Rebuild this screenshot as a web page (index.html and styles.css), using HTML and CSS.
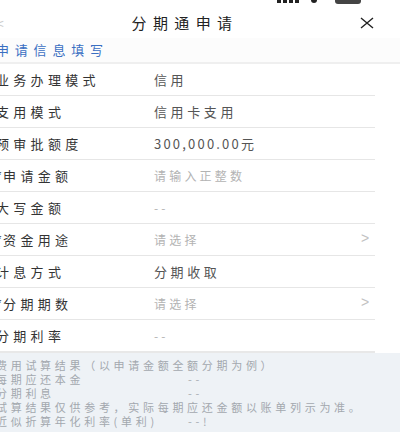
FILE: index.html
```html
<!DOCTYPE html>
<html lang="zh">
<head>
<meta charset="utf-8">
<link rel="stylesheet" href="styles.css">
</head>
<body>
<div class="page">
  <div class="status">
    <span class="time">10:38</span>
    <span class="icons">
      <span class="sig"><i></i><i></i><i></i><i></i></span>
      <span class="wifi"></span>
      <span class="bat"></span>
    </span>
  </div>
  <div class="header">
    <span class="back">&lt;</span>
    <span class="title">分期通申请</span>
    <svg class="close" width="16" height="12" viewBox="0 0 16 12"><path d="M2 1 L14 11 M14 1 L2 11" stroke="#222" stroke-width="1.4" fill="none"/></svg>
  </div>
  <div class="section">申请信息填写</div>
  <div class="list">
    <div class="row"><span class="label">业务办理模式</span><span class="value">信用</span></div>
    <div class="row"><span class="label">支用模式</span><span class="value">信用卡支用</span></div>
    <div class="row"><span class="label">预审批额度</span><span class="value amount">300,000.00元</span></div>
    <div class="row"><span class="label"><span class="req">*</span>申请金额</span><span class="value ph">请输入正整数</span></div>
    <div class="row"><span class="label">大写金额</span><span class="value ph">--</span></div>
    <div class="row"><span class="label"><span class="req">*</span>资金用途</span><span class="value ph">请选择</span><span class="chev">&gt;</span></div>
    <div class="row"><span class="label">计息方式</span><span class="value">分期收取</span></div>
    <div class="row"><span class="label"><span class="req">*</span>分期期数</span><span class="value ph">请选择</span><span class="chev">&gt;</span></div>
    <div class="row last"><span class="label">分期利率</span><span class="value ph">--</span></div>
  </div>
  <div class="calc">
    <div class="line">费用试算结果（以申请金额全额分期为例）</div>
    <div class="line"><span class="k">每期应还本金</span><span class="v">--</span></div>
    <div class="line"><span class="k">分期利息</span><span class="v">--</span></div>
    <div class="line">试算结果仅供参考，实际每期应还金额以账单列示为准。</div>
    <div class="line"><span class="k">近似折算年化利率(单利)</span><span class="v">--!</span></div>
  </div>
</div>
</body>
</html>
```
FILE: styles.css
```css
html, body {
  margin: 0;
  padding: 0;
  background: #fafafa;
}
.page {
  width: 400px;
  height: 432px;
  overflow: hidden;
  font-family: "Noto Sans CJK SC", "Noto Sans", sans-serif;
  color: #333;
  background: #fafafa;
  position: relative;
}
.status {
  height: 6px;
  overflow: hidden;
  position: relative;
  background: #fff;
}
.time {
  position: absolute;
  left: 24px;
  top: -14px;
  font-family: "Liberation Sans", sans-serif;
  font-size: 15px;
  font-weight: bold;
  color: #111;
}
.icons {
  position: absolute;
  left: 277px;
  top: 0;
  display: flex;
  gap: 12px;
  align-items: flex-start;
}
.sig {
  display: flex;
  gap: 2px;
}
.sig i {
  display: block;
  width: 4px;
  height: 3px;
  background: #222;
}
.wifi { width: 6px; height: 3px; background: #222; border-radius: 0 0 3px 3px; }
.bat { width: 26px; height: 4px; background: #444; border-radius: 0 0 3px 3px; margin-left: 6px; }
.header {
  height: 32px;
  display: flex;
  align-items: center;
  justify-content: center;
  position: relative;
  background: #fff;
}
.back {
  position: absolute;
  left: -4px;
  top: 7px;
  font-size: 14px;
  color: #ccc;
}
.title {
  font-size: 15px;
  letter-spacing: 6.4px;
  color: #222;
  margin-right: 30px;
}
.close {
  position: absolute;
  left: 359px;
  top: 11px;
}
.section {
  height: 24px;
  line-height: 24px;
  font-size: 13px;
  letter-spacing: 5.8px;
  color: #3a6fc2;
  margin-left: -4px;
  background: #fcfcfc;
  border-bottom: 2px solid #efefef;
}
.list {
  background: #fff;
}
.row {
  height: 31px;
  margin-right: 25px;
  border-bottom: 1px solid #e6e6e6;
  display: flex;
  align-items: center;
  font-size: 13px;
  position: relative;
}
.row.last {
  border-bottom: 2px solid #e8e8e8;
}
.label {
  width: 158px;
  flex: none;
  margin-left: -4px;
  letter-spacing: 4.3px;
  color: #333;
}
.req {
  color: #555;
  letter-spacing: 1px;
}
.value {
  letter-spacing: 3.6px;
  color: #555;
}
.value.amount {
  letter-spacing: 2.2px;
}
.value.ph {
  font-size: 12px;
  letter-spacing: 3.2px;
  color: #b3b3b3;
}
.chev {
  position: absolute;
  left: 361px;
  top: 6px;
  font-size: 14px;
  color: #c2c2c2;
  font-family: "Liberation Sans", sans-serif;
}
.calc {
  background: #eef2f6;
  padding-top: 5px;
  height: 80px;
}
.line {
  height: 14px;
  line-height: 14px;
  font-size: 11px;
  letter-spacing: 3.7px;
  color: #a3a8ae;
  margin-left: -4px;
  display: flex;
  white-space: nowrap;
}
.k {
  width: 192px;
  flex: none;
}
.v {
  color: #a8adb3;
}
```
